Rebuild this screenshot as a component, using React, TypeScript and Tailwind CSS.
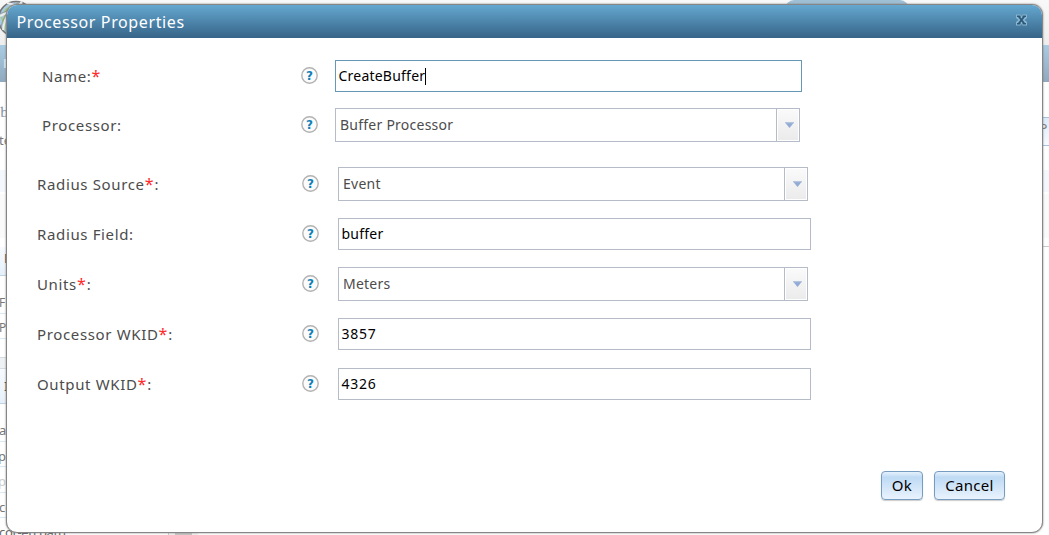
import React from "react";

function Help() {
  return (
    <svg className="mb-[2px] block h-[17px] w-[17px] shrink-0" viewBox="0 0 17 17">
      <circle cx="8.5" cy="8.5" r="7.7" fill="#fbfbfb" stroke="#b3b3b3" strokeWidth="1.4" />
      <text x="8.5" y="12.7" textAnchor="middle" fontFamily="'DejaVu Sans', sans-serif" fontWeight="700" fontSize="12" fill="#0f7fb5">?</text>
    </svg>
  );
}

function Label({ text, required, after = "", gap }: { text: string; required?: boolean; after?: string; gap: string }) {
  return (
    <div className={`shrink-0 whitespace-pre pb-px text-[15px] leading-[20px] tracking-[0.64px] text-[#4c4c4c] ${gap}`}>
      {text}
      {required && <span className="text-[16px] leading-[16px] tracking-[1px] text-[#ff2a2a]">*</span>}
      {after}
    </div>
  );
}

function SelectBox({ value, width }: { value: string; width: string }) {
  return (
    <div className={`flex h-[34px] border border-[#b5bcc7] bg-white ${width}`}>
      <div className="flex-1 pl-[4px] text-[14px] leading-[31px] tracking-[0.24px] text-[#4c4c4c]">{value}</div>
      <div className="w-[23px] border-l border-[#b5bcc7] p-px">
        <div className="flex h-full items-center justify-center bg-linear-to-b from-[#fafafa] to-[#ebebeb]">
          <svg className="ml-[2px] h-[6px] w-[9px] shrink-0" viewBox="0 0 9 6">
            <path d="M0 .5h9L4.500 6z" fill="#92aad6" />
            <path d="M0 0h9v1.200H0z" fill="#b4c6de" />
          </svg>
        </div>
      </div>
    </div>
  );
}

function TextBox({ value, width, focused, numeric }: { value: string; width: string; focused?: boolean; numeric?: boolean }) {
  return (
    <div className={`flex h-[32px] items-center border bg-white pl-[2.5px] text-[14px] leading-[30px] text-black ${numeric ? "tracking-[0.75px]" : "tracking-[0.22px]"} ${width} ${focused ? "border-[#6599b5]" : "border-[#b5bcc7]"}`}>
      {value}
      {focused && <span className="h-[17px] w-px bg-black" />}
    </div>
  );
}

function Backdrop() {
  return (
    <div className="absolute inset-0 overflow-hidden bg-white text-[13px] leading-[16px] text-[#777]">
      <div className="flex h-[45px] justify-end bg-linear-to-b from-[#f8f8f8] to-[#eeeeee]">
        <div className="mr-[140px] h-5 w-[124px] rounded-t-[9px] bg-[#9fbfd5]" />
      </div>
      <div className="h-[37px] bg-linear-to-b from-[#a9cce2] to-[#91a9bf] pl-[3px] pt-[10px] font-bold text-[#e4edf4]">M</div>
      <div className="h-[35px] pt-[22px] font-serif text-[15px] text-[#8896aa]">b</div>
      <div className="flex h-[29px] justify-between">
        <div className="-ml-px pt-[15px]">te</div>
        <div className="w-[9px] border-y border-[#a8c2dc] bg-linear-to-b from-[#dcebf9] to-[#f7fbff] pt-[3px] text-[12px]">P</div>
      </div>
      <div className="mt-[24px] h-[22px] bg-[#f4f8fd]" />
      <div className="mt-[2px] h-[44px] bg-[#fafafa]" />
      <div className="ml-auto h-[9px] w-3 border-b border-[#ccc]" />
      <div className="w-[400px]">
        <div className="h-[29px] border-b border-[#c1d2e2] bg-linear-to-b from-[#f7fbff] to-[#e6f0fa] pl-1 pt-[3px] text-[#444]">N</div>
        <div className="h-[38px] border-b border-[#d9e9f5] pt-[19px] text-[12px]"><span className="-ml-px">Fi</span></div>
        <div className="h-[25px] border-b border-[#d9e9f5] pt-[6px] text-[12px]"><span className="-ml-px">P</span></div>
        <div className="mt-[18px] h-[12px] border-y border-[#d5dbe2] bg-[#eef1f3]" />
        <div className="h-[35px] border-b border-[#c1d2e2] bg-linear-to-b from-[#f7fbff] to-[#e6f0fa] pl-1 pt-[9px] text-[#444]">I</div>
        <div className="h-[38px] border-b border-[#d9e9f5] pt-[18px]"><span className="-ml-px">ac</span></div>
        <div className="h-[25px] border-b border-[#d9e9f5] pt-[6px]"><span className="-ml-[2px]">p</span></div>
        <div className="h-[26px] border-b border-[#d9e9f5] pt-[6px] text-[#ccc]"><span className="-ml-[2px]">p</span></div>
        <div className="h-[25px] border-b border-[#d9e9f5] pt-[6px]"><span className="-ml-px">cc</span></div>
        <div className="flex h-[20px]">
          <div className="w-[169px] border-r border-[#ccc] pt-[6px] text-[#666]"><span className="-ml-px tracking-[-0.35px]">cor-en path</span></div>
          <div className="w-[29px] bg-[#f2f2f2] px-[6px]"><div className="h-full bg-[#c7c7c7]" /></div>
        </div>
      </div>
      <svg className="absolute left-[-3px] top-0 h-[39px] w-[39px]" viewBox="0 0 39 39">
        <circle cx="19" cy="19" r="17.5" fill="#a9cbe3" stroke="#777" strokeWidth="1.5" />
        <path d="M8 9L17 4l5 5-9 8-7 3zM3 15l7 8-1 9z" fill="#a3c887" />
        <path d="M3 16C12 12 20 8 25 2M6 30C8 15 15 6 25 2M10 3c8 1 14 5 20 12" fill="none" stroke="#eee" strokeWidth="2" />
        <path d="M2 14C11 11 18 7 23 2M4 27C7 14 14 6 23 2" fill="none" stroke="#888" strokeWidth="0.700" />
      </svg>
    </div>
  );
}

export default function App() {
  return (
    <div className="relative h-[535px] w-[1049px] overflow-hidden font-['Noto_Sans',sans-serif]">
      <Backdrop />
      <div className="relative ml-[6px] pt-[4px]">
        <div className="flex h-[529px] w-[1037px] flex-col overflow-hidden rounded-[11px] border border-[#858585] bg-white shadow-[0_0_2px_#777]">
          <div className="flex h-[33px] shrink-0 items-center justify-between bg-linear-to-b from-[#65a8d0] to-[#376488] pl-[9.5px] pr-[14px]">
            <div className="pt-[2px] text-[16px] leading-[31px] tracking-[0.62px] text-white">Processor Properties</div>
            <svg className="mb-[4px] h-[12px] w-[13px]" viewBox="0 0 13 11">
              <path d="M1 0h4.500l1 1.500L7.500 0H12v3.500L9.500 5.500l2.500 2V11H7.500l-1-1.500-1 1.500H1V7.500l2.500-2-2.500-2z" fill="#8ab6d0" />
              <path d="M2 1.800h3.500M7.500 1.800H11M2 9.200h3.500M7.500 9.200H11" stroke="#2d5a78" strokeWidth="1.400" />
              <path d="M3.800 2l5.400 7M9.200 2L3.800 9" stroke="#2d5a78" strokeWidth="2" />
            </svg>
          </div>
          <div className="flex flex-col gap-[16px] pl-[35px] pt-[22px]">
            <div className="flex h-[32px] items-center">
              <Label text="Name:" required gap="w-[259px]" /><Help />
              <div className="ml-[17px]"><TextBox value="CreateBuffer" width="w-[467px]" focused /></div>
            </div>
            <div className="flex h-[34px] items-center">
              <Label text="Processor:" gap="w-[259px]" /><Help />
              <div className="ml-[17px]"><SelectBox value="Buffer Processor" width="w-[465px]" /></div>
            </div>
          </div>
          <div className="flex flex-col gap-[16px] pl-[30px] pt-[25px]">
            <div className="flex h-[34px] items-center">
              <Label text="Radius Source" required after=":" gap="w-[265px]" /><Help />
              <div className="ml-[19px]"><SelectBox value="Event" width="w-[470px]" /></div>
            </div>
            <div className="mt-px flex h-[32px] items-center">
              <Label text="Radius Field:" gap="w-[265px]" /><Help />
              <div className="ml-[19px]"><TextBox value="buffer" width="w-[473px]" /></div>
            </div>
            <div className="mt-px flex h-[34px] items-center">
              <Label text="Units" required after=":" gap="w-[265px]" /><Help />
              <div className="ml-[19px]"><SelectBox value="Meters" width="w-[470px]" /></div>
            </div>
            <div className="mt-px flex h-[32px] items-center">
              <Label text="Processor WKID" required after=":" gap="w-[265px]" /><Help />
              <div className="ml-[19px]"><TextBox value="3857" width="w-[473px]" numeric /></div>
            </div>
            <div className="mt-[2px] flex h-[32px] items-center">
              <Label text="Output WKID" required after=":" gap="w-[265px]" /><Help />
              <div className="ml-[19px]"><TextBox value="4326" width="w-[473px]" numeric /></div>
            </div>
          </div>
          <div className="mt-[71px] flex gap-[11px] pl-[874px]">
            <button className="h-[29px] w-[42px] rounded-[4px] border border-[#769dc0] bg-linear-to-b from-[#e5f1fd] via-[#bedaf4] via-20% to-[#eaf3fd] text-[15px] leading-[27px] tracking-[0.3px] text-black shadow-[0_1px_1px_#ccc]">Ok</button>
            <button className="h-[29px] w-[71px] rounded-[4px] border border-[#769dc0] bg-linear-to-b from-[#e5f1fd] via-[#bedaf4] via-20% to-[#eaf3fd] text-[15px] leading-[27px] tracking-[0.3px] text-black shadow-[0_1px_1px_#ccc]">Cancel</button>
          </div>
        </div>
      </div>
    </div>
  );
}
